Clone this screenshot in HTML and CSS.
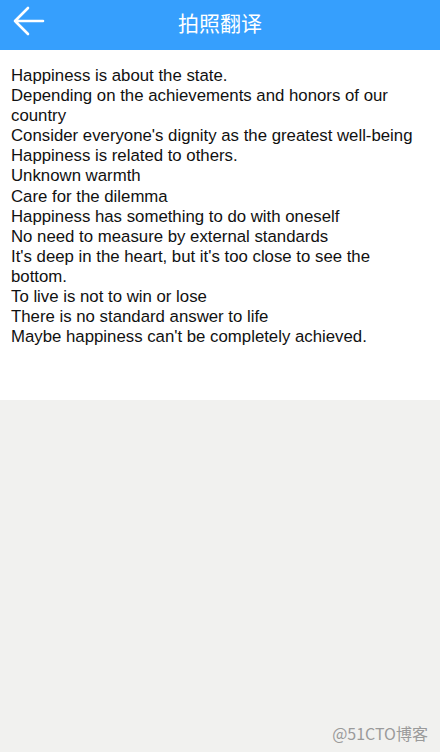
FILE: index.html
```html
<!DOCTYPE html>
<html lang="zh">
<head>
<meta charset="utf-8">
<link rel="stylesheet" href="styles.css">
</head>
<body>
<div class="page">
  <header class="bar">
    <svg class="back" width="34" height="30" viewBox="0 0 34 30">
      <path d="M16 2 L3 15 L16 28 M3 15 H31" fill="none" stroke="#fff" stroke-width="2.6" stroke-linecap="round" stroke-linejoin="round"/>
    </svg>
    <h1 class="title">拍照翻译</h1>
  </header>
  <main class="content">
    <p class="text">Happiness is about the state.<br>Depending on the achievements and honors of our country<br>Consider everyone's dignity as the greatest well-being<br>Happiness is related to others.<br>Unknown warmth<br>Care for the dilemma<br>Happiness has something to do with oneself<br>No need to measure by external standards<br>It's deep in the heart, but it's too close to see the bottom.<br>To live is not to win or lose<br>There is no standard answer to life<br>Maybe happiness can't be completely achieved.</p>
  </main>
  <footer class="rest">
    <span class="mark">@51CTO博客</span>
  </footer>
</div>
</body>
</html>
```
FILE: styles.css
```css
html, body { margin: 0; padding: 0; }
body { width: 440px; height: 752px; overflow: hidden; font-family: "Liberation Sans", Arial, "Noto Sans CJK SC", sans-serif; }
.page { display: flex; flex-direction: column; height: 752px; background: #f1f1ef; }
.bar { position: relative; height: 50px; background: #369ffd; display: flex; align-items: center; justify-content: center; flex: none; }
.back { position: absolute; left: 12px; top: 6px; }
.title { margin: 0; color: #fff; font-family: "Noto Sans CJK SC", sans-serif; font-weight: 400; font-size: 21px; line-height: 28px; margin-top: -7px; }
.content { background: #fff; height: 350px; flex: none; padding: 16px 11px 0; box-sizing: border-box; }
.text { margin: 0; font-size: 16.8px; line-height: 20.1px; color: #111; }
.rest { flex: 1; display: flex; justify-content: flex-end; align-items: flex-end; padding: 0 12px 9px 0; }
.mark { color: #9a9a9a; font-size: 16px; font-family: "Noto Sans CJK SC", sans-serif; line-height: 20px; }
```
